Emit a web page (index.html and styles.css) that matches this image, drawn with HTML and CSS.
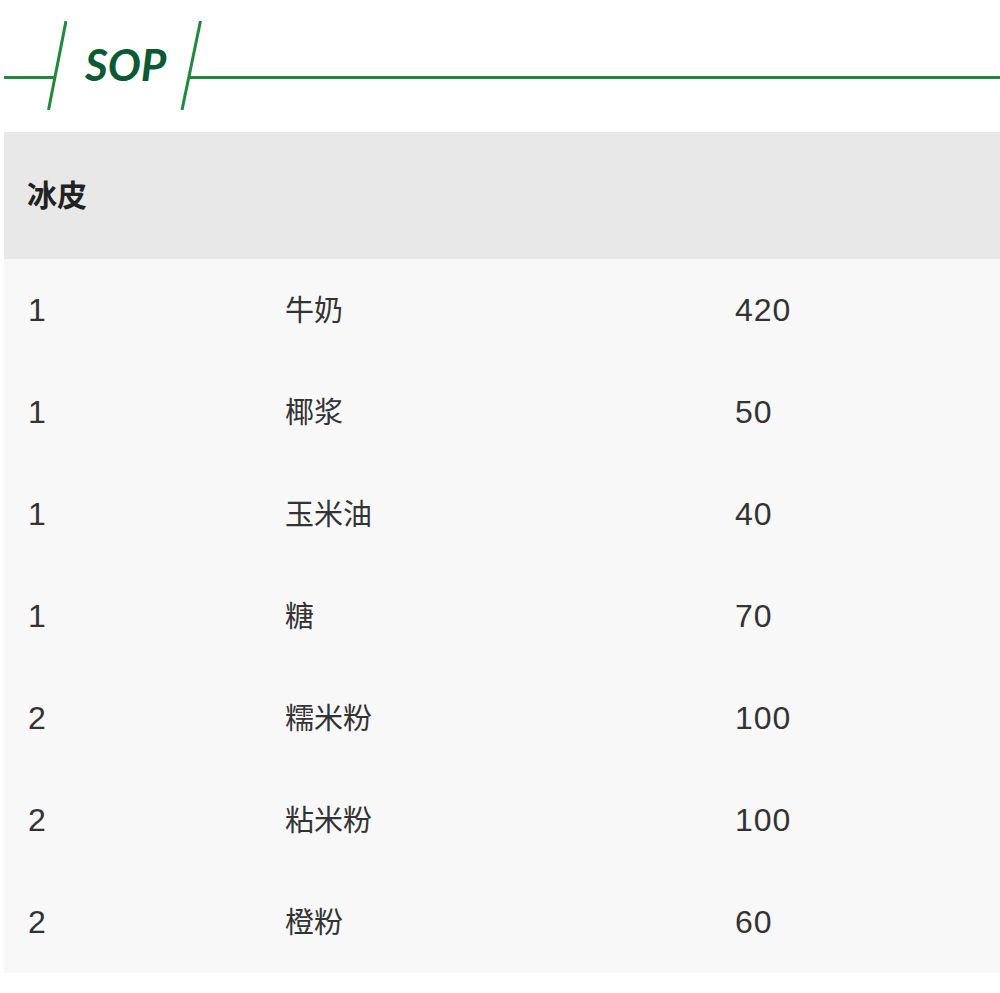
FILE: index.html
```html
<!DOCTYPE html>
<html lang="zh">
<head>
<meta charset="utf-8">
<title>SOP</title>
<link rel="stylesheet" href="styles.css">
</head>
<body>
<div class="title-bar">
  <svg class="deco-left" width="63" height="89" viewBox="0 0 63 89"><path d="M0 56.5H51" stroke="#1f8a3b" stroke-width="3" fill="none"/><path d="M62 0L44.5 89" stroke="#1f8a3b" stroke-width="3" fill="none"/></svg>
  <span class="title">SOP</span>
  <svg class="deco-right" width="22" height="89" viewBox="0 0 22 89"><path d="M20.5 0L2 89" stroke="#1f8a3b" stroke-width="3" fill="none"/><path d="M9 56.5H22" stroke="#1f8a3b" stroke-width="3" fill="none"/></svg>
  <div class="rule"></div>
</div>
<div class="table">
  <div class="head"><span class="head-text">冰皮</span></div>
  <div class="row"><span class="c1">1</span><span class="c2">牛奶</span><span class="c3">420</span></div>
  <div class="row"><span class="c1">1</span><span class="c2">椰浆</span><span class="c3">50</span></div>
  <div class="row"><span class="c1">1</span><span class="c2">玉米油</span><span class="c3">40</span></div>
  <div class="row"><span class="c1">1</span><span class="c2">糖</span><span class="c3">70</span></div>
  <div class="row"><span class="c1">2</span><span class="c2">糯米粉</span><span class="c3">100</span></div>
  <div class="row"><span class="c1">2</span><span class="c2">粘米粉</span><span class="c3">100</span></div>
  <div class="row"><span class="c1">2</span><span class="c2">橙粉</span><span class="c3">60</span></div>
</div>
</body>
</html>
```
FILE: styles.css
```css
html, body {
  margin: 0;
  padding: 0;
  background: #ffffff;
}
body {
  font-family: "Liberation Sans", "Noto Sans CJK SC", sans-serif;
  color: #333333;
}
.title-bar {
  display: flex;
  align-items: flex-start;
  padding: 21px 0 0 4px;
  height: 89px;
  margin-bottom: 22px;
}
.deco-left, .deco-right {
  display: block;
  flex: none;
}
.title {
  font-family: Lato, "Liberation Sans", sans-serif;
  font-weight: 700;
  font-style: italic;
  font-size: 44px;
  line-height: 1;
  color: #0b5a33;
  margin: 21px 14px 0 18px;
}
.rule {
  flex: 1;
  height: 3px;
  margin-top: 55px;
  background: #1f8a3b;
}
.table {
  margin-left: 4px;
}
.head {
  height: 127px;
  background: #e8e8e8;
  display: flex;
  align-items: center;
  padding-left: 23px;
  font-family: "Noto Sans CJK SC", sans-serif;
  font-weight: 700;
  font-size: 30px;
  color: #222222;
}
.head-text {
  margin-bottom: 6px;
}
.row {
  height: 102px;
  background: #f8f8f8;
  display: grid;
  grid-template-columns: 257px 450px 1fr;
  align-items: center;
  padding-left: 24px;
  font-size: 32px;
}
.c2 {
  font-family: "Noto Sans CJK SC", sans-serif;
  font-size: 29px;
  margin-bottom: 4px;
}
.c1, .c3 {
  letter-spacing: 1px;
}
```
